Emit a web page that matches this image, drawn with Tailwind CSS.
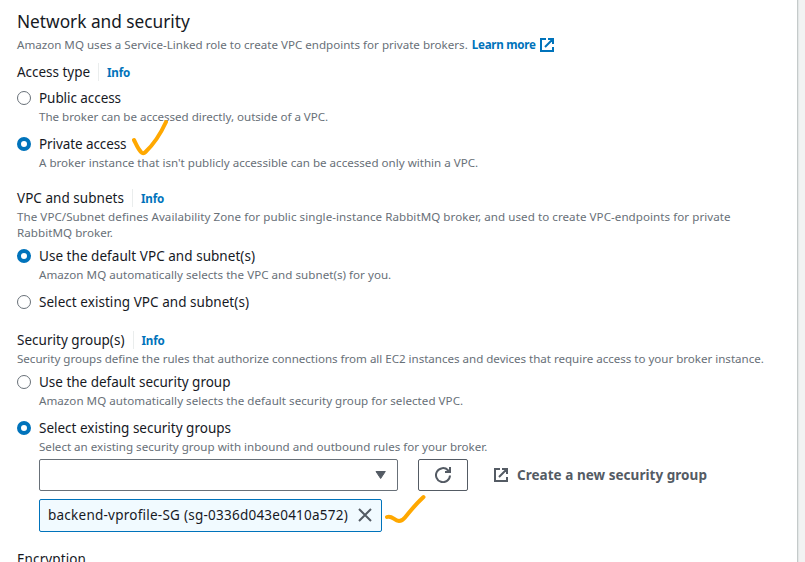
<!DOCTYPE html>
<html lang="en">
<head>
<meta charset="utf-8">
<title>Network and security</title>
<script src="https://cdn.jsdelivr.net/npm/@tailwindcss/browser@4"></script>
</head>
<body class="w-[805px] h-[562px] overflow-hidden bg-[#f2f3f3] font-['Noto_Sans',sans-serif] text-[13.5px] leading-5 text-[#16191f] whitespace-nowrap">
<main class="relative w-[798px] h-[562px] overflow-hidden bg-white border-r border-[#c5caca] pl-[17px] pt-2.5 shadow-[1px_0_1px_#e3e7e7]">
  <h1 class="h-6 text-[17.3px] leading-6 tracking-[-0.017px]">Network and security</h1>
  <p class="mt-[3px] flex items-center h-4 text-[11.6px] leading-4 text-[#687078]">
    <span class="tracking-[-0.003px]">Amazon MQ uses a Service-Linked role to create VPC endpoints for private brokers.</span>
    <a class="ml-1 flex items-center gap-1 font-bold text-[#0073bb] tracking-[-0.255px]">Learn more
      <svg class="w-3.5 h-3.5" viewBox="0 0 14 14" fill="none" stroke="currentColor" stroke-width="2"><path d="M6 1H1v12h12V9M8 1h5v5M13 1L5 9"/></svg>
    </a>
  </p>

  <section>
    <div class="mt-[9px] flex items-center h-5">
      <h2 class="tracking-[-0.03px]">Access type</h2>
      <a class="ml-2 pl-2 h-[18px] leading-[19px] border-l border-[#eaeded] text-[11.6px] font-bold text-[#0073bb] tracking-[-0.2px]">Info</a>
    </div>
    <label class="mt-1.5 flex items-center h-5 gap-2">
      <span class="w-3.5 h-3.5 rounded-full border border-[#687078]"></span>
      <span class="tracking-[-0.066px]">Public access</span>
    </label>
    <p class="mt-px ml-[22px] text-[11.6px] leading-4 text-[#687078] tracking-[-0.022px]">The broker can be accessed directly, outside of a VPC.</p>
    <label class="mt-[9px] flex items-center h-5 gap-2">
      <span class="w-3.5 h-3.5 rounded-full border-4 border-[#0073bb]"></span>
      <span class="tracking-[-0.089px]">Private access</span>
    </label>
    <p class="mt-px ml-[22px] text-[11.6px] leading-4 text-[#687078] tracking-[0px]">A broker instance that isn't publicly accessible can be accessed only within a VPC.</p>
  </section>

  <section>
    <div class="mt-[17px] flex items-center h-5">
      <h2 class="tracking-[0.037px]">VPC and subnets</h2>
      <a class="ml-2 pl-2 h-[18px] leading-[19px] border-l border-[#eaeded] text-[11.6px] font-bold text-[#0073bb] tracking-[-0.2px]">Info</a>
    </div>
    <p class="mt-px text-[11.6px] leading-4 text-[#687078]"><span class="tracking-[0.051px]">The VPC/Subnet defines Availability Zone for public single-instance RabbitMQ broker, and used to create VPC-endpoints for private</span><br><span class="tracking-[0.046px]">RabbitMQ broker.</span></p>
    <label class="mt-[5px] flex items-center h-5 gap-2">
      <span class="w-3.5 h-3.5 rounded-full border-4 border-[#0073bb]"></span>
      <span class="tracking-[0.04px]">Use the default VPC and subnet(s)</span>
    </label>
    <p class="mt-px ml-[22px] text-[11.6px] leading-4 text-[#687078] tracking-[0.027px]">Amazon MQ automatically selects the VPC and subnet(s) for you.</p>
    <label class="mt-[9px] flex items-center h-5 gap-2">
      <span class="w-3.5 h-3.5 rounded-full border border-[#687078]"></span>
      <span class="tracking-[0.046px]">Select existing VPC and subnet(s)</span>
    </label>
  </section>

  <section>
    <div class="mt-[18px] flex items-center h-5">
      <h2 class="tracking-[0.019px]">Security group(s)</h2>
      <a class="ml-2 pl-2 h-[18px] leading-[19px] border-l border-[#eaeded] text-[11.6px] font-bold text-[#0073bb] tracking-[-0.2px]">Info</a>
    </div>
    <p class="mt-px text-[11.6px] leading-4 text-[#687078] tracking-[-0.027px]">Security groups define the rules that authorize connections from all EC2 instances and devices that require access to your broker instance.</p>
    <label class="mt-[5px] flex items-center h-5 gap-2">
      <span class="w-3.5 h-3.5 rounded-full border border-[#687078]"></span>
      <span class="tracking-[-0.01px]">Use the default security group</span>
    </label>
    <p class="mt-px ml-[22px] text-[11.6px] leading-4 text-[#687078] tracking-[0.032px]">Amazon MQ automatically selects the default security group for selected VPC.</p>
    <label class="mt-[9px] flex items-center h-5 gap-2">
      <span class="w-3.5 h-3.5 rounded-full border-4 border-[#0073bb]"></span>
      <span class="tracking-[-0.002px]">Select existing security groups</span>
    </label>
    <p class="mt-px ml-[22px] text-[11.6px] leading-4 text-[#687078] tracking-[-0.013px]">Select an existing security group with inbound and outbound rules for your broker.</p>
    <div class="mt-1 ml-[22px] flex items-center h-8">
      <div class="w-[359px] h-8 flex items-center justify-end pr-[11px] border border-[#687078] rounded-xs text-[#545b64]">
        <svg class="w-[11px] h-2.5" viewBox="0 0 11 10" fill="currentColor" stroke="currentColor" stroke-linejoin="round"><path d="M1 1.500h9.300L5.650 8.500z"/></svg>
      </div>
      <button class="ml-5 w-[50px] h-8 flex items-center justify-center border border-[#545b64] rounded-xs text-[#545b64]">
        <svg class="w-4 h-4" viewBox="0 0 16 16" fill="none" stroke="currentColor" stroke-width="2"><path d="M15 8.500A7 7 0 1 1 13 3.200L15 5M15 0v5h-5"/></svg>
      </button>
      <a class="ml-[26px] flex items-center gap-[9px] font-bold text-[#545b64] tracking-[0.036px]">
        <svg class="w-3.5 h-3.5" viewBox="0 0 14 14" fill="none" stroke="currentColor" stroke-width="2"><path d="M6 1H1v12h12V9M8 1h5v5M13 1L5 9"/></svg>
        Create a new security group
      </a>
    </div>
    <div class="mt-2 ml-[22px] w-[343px] h-[33px] flex items-center pl-2 border border-[#0073bb] bg-[#f1faff] rounded-xs">
      <span class="pb-px tracking-[0.24px]">backend-vprofile-SG (sg-0336d043e0410a572)</span>
      <svg class="ml-[9.500px] mb-px w-3.5 h-3.5 text-[#545b64]" viewBox="0 0 14 14" fill="none" stroke="currentColor" stroke-width="2"><path d="M1 1l12 12M13 1L1 13"/></svg>
    </div>
  </section>
  <h2 class="mt-[17px] h-5 tracking-[0.104px]">Encryption</h2>

  <svg class="absolute left-[132px] top-[118px] w-9 h-10" viewBox="132 118 36 40" fill="none" stroke="#ffa800" stroke-width="4" stroke-linecap="round" stroke-linejoin="round"><path d="M134 140c2 4 4 9 7 12 1 1.500 3 1.500 4.500 0C154 144 160 135 166 122"/></svg>
  <svg class="absolute left-[384px] top-[492px] w-11 h-8 overflow-visible" viewBox="384 492 44 32" fill="none" stroke="#ffa800" stroke-width="4" stroke-linecap="round" stroke-linejoin="round"><path d="M387 517c5-2 7 3.500 12 4 2 0 4-1 6-3.500C411 510 417 503 423.500 497"/></svg>
</main>
</body>
</html>
